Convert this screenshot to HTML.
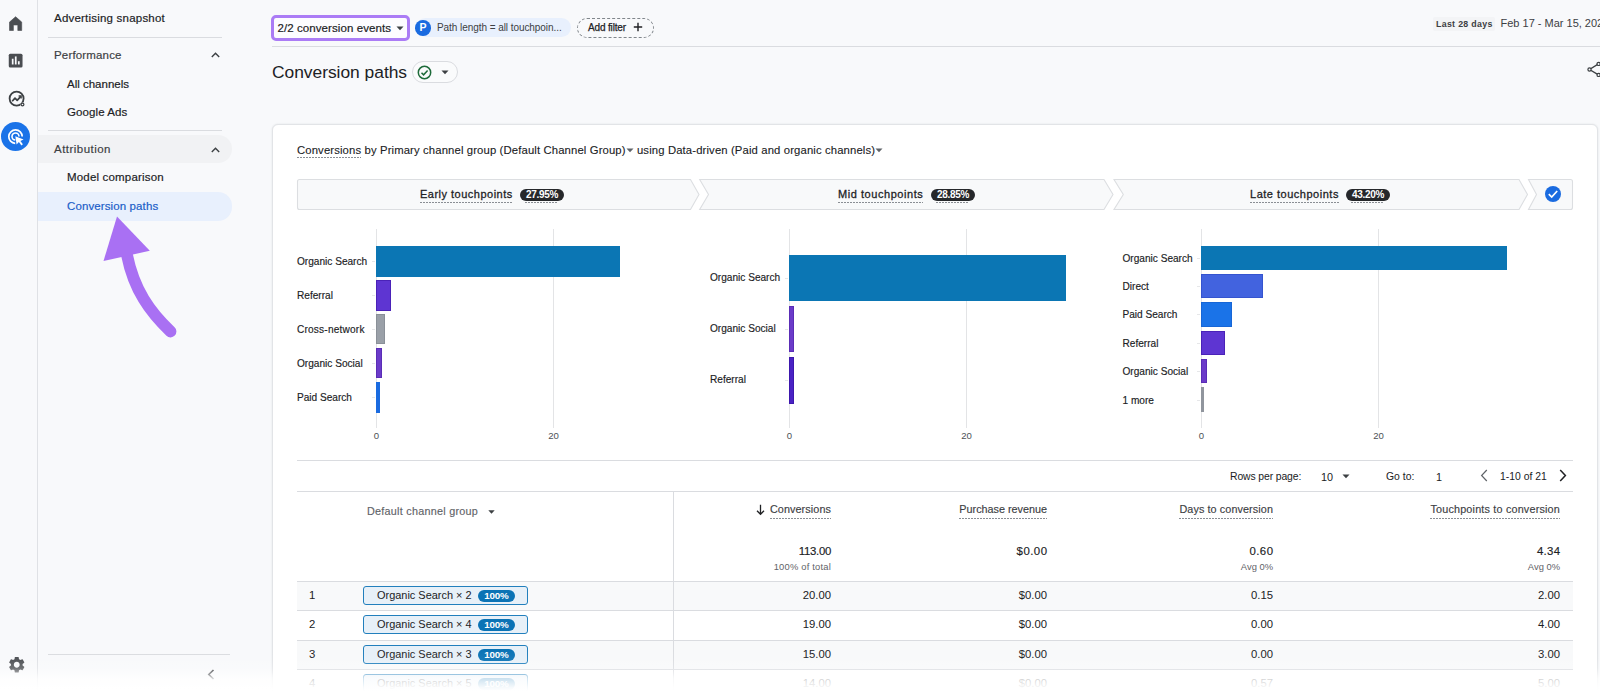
<!DOCTYPE html>
<html>
<head>
<meta charset="utf-8">
<title>Conversion paths</title>
<style>
*{box-sizing:border-box;margin:0;padding:0}
html,body{width:1600px;height:694px;overflow:hidden;background:#f8f9fb;font-family:"Liberation Sans",sans-serif;color:#202124}
#root{position:relative;width:1600px;height:694px;overflow:hidden;background:#f8f9fb}
.a{position:absolute;white-space:nowrap;line-height:1}
.t{position:absolute;white-space:nowrap;line-height:1;transform-origin:0 50%}
.r{text-align:right}
.m{-webkit-text-stroke:.28px currentColor}
.m2{-webkit-text-stroke:.18px currentColor}
.hl{position:absolute;height:1px;background:#dadce0}
.vl{position:absolute;width:1px;background:#dadce0}
.dot{background:repeating-linear-gradient(to right,#8a8e94 0,#8a8e94 2px,rgba(0,0,0,0) 2px,rgba(0,0,0,0) 3px) 0 100%/100% 1px no-repeat;padding-bottom:2.5px}
/* sidebar */
.nav{font-size:11.5px;color:#202124}
.navh{font-size:11.5px;color:#3c4043}
/* chart */
.lbl{font-size:10.1px;color:#202124;-webkit-text-stroke:.15px #202124}
.tick{font-size:9.600px;color:#4d5156;transform:translateX(-50%)}
.bar{position:absolute}
.grid{position:absolute;width:1px;background:#e3e4e6}
/* table */
.th{font-size:10.8px;color:#3c4043;-webkit-text-stroke:.15px currentColor}
.td{font-size:11.3px;color:#202124}
.th .dot{padding-bottom:3.800px}
.pg{-webkit-text-stroke:0 !important}
.sub{font-size:9.400px;color:#5f6368}
.tot{font-size:11.400px;color:#202124;-webkit-text-stroke:.15px #202124}
.chip{position:absolute;left:363px;width:164.500px;height:19px;border:1px solid #217fbd;border-radius:3px;background:#e7f0f8}
.chip span.x{position:absolute;left:13px;top:3.300px;font-size:10.950px;color:#202124;line-height:1;white-space:nowrap}
.chip span.b{position:absolute;left:114px;top:3px;width:37px;height:11.500px;border-radius:6px;background:#0b73b5;color:#fff;font-size:9.800px;font-weight:bold;line-height:11.500px;text-align:center;letter-spacing:-.2px}
.stage{position:absolute;top:179px;height:31px}
.badge{position:absolute;top:189px;height:11.5px;width:44px;border-radius:6px;background:#26282b;color:#fff;font-size:10px;font-weight:bold;line-height:12px;text-align:center;letter-spacing:-.3px}
.badge i{font-style:normal}
.badge:after{content:"";position:absolute;left:5px;right:6px;top:13px;height:1px;background:repeating-linear-gradient(to right,#8a8e94 0,#8a8e94 2px,rgba(0,0,0,0) 2px,rgba(0,0,0,0) 3px)}
</style>
</head>
<body>
<div id="root">

<!-- ===== icon rail ===== -->
<div class="vl" style="left:37px;top:0;height:694px;background:#dfe1e5"></div>
<svg class="a" style="left:8px;top:15px" width="16" height="17" viewBox="0 0 16 17"><path d="M1.500 7.100 L7.600 1.700 L13.700 7.100 V15.500 H9.800 V10 H5.400 V15.500 H1.500 Z" fill="#4a4d51" stroke="#4a4d51" stroke-width=".6" stroke-linejoin="round"/></svg>
<svg class="a" style="left:8.400px;top:53px" width="15.300" height="15.300" viewBox="0 0 16 16"><rect x="0.8" y="0.8" width="14.4" height="14.4" rx="1.6" fill="#4a4d51"/><rect x="4" y="6" width="1.8" height="6" fill="#f8f9fb"/><rect x="7.2" y="3.6" width="1.8" height="8.4" fill="#f8f9fb"/><rect x="10.4" y="8.6" width="1.8" height="3.4" fill="#f8f9fb"/></svg>
<svg class="a" style="left:7.900px;top:89.700px" width="18" height="18" viewBox="0 0 18 18"><circle cx="8.600" cy="8.600" r="7" fill="none" stroke="#3c4043" stroke-width="1.800"/><path d="M4.200 11.200 L7 8.100 L9.200 10.300 L12.800 6.400" fill="none" stroke="#3c4043" stroke-width="1.700" stroke-linejoin="round"/><path d="M10.600 6 H13.100 V8.500" fill="none" stroke="#3c4043" stroke-width="1.400"/><rect x="12.600" y="12.600" width="4" height="4" fill="#f8f9fb"/><circle cx="14.500" cy="14.500" r="1.400" fill="#f8f9fb" stroke="#3c4043" stroke-width="1.200"/></svg>
<div class="a" style="left:1px;top:122px;width:29px;height:29px;border-radius:50%;background:#1a73e8"></div>
<svg class="a" style="left:6px;top:127px" width="20" height="20" viewBox="0 0 20 20"><path d="M16.2 9.6 A6.7 6.7 0 1 0 9.2 16.3" fill="none" stroke="#fff" stroke-width="1.7"/><path d="M13 9.6 A3.5 3.5 0 1 0 9.3 13" fill="none" stroke="#fff" stroke-width="1.6"/><path d="M9.3 9.2 L17.6 12.6 L14.4 14 L16.9 17.3 L15.4 18.4 L12.9 15.1 L10.6 17.4 Z" fill="#fff"/></svg>
<svg class="a" style="left:6.500px;top:654.500px" width="19.500" height="19.500" viewBox="0 0 24 24"><path fill="#4a4d51" d="M19.14 12.94c.04-.3.06-.61.06-.94 0-.32-.02-.64-.07-.94l2.03-1.58a.49.49 0 0 0 .12-.61l-1.92-3.32a.488.488 0 0 0-.59-.22l-2.39.96c-.5-.38-1.03-.7-1.62-.94l-.36-2.54a.484.484 0 0 0-.48-.41h-3.84c-.24 0-.43.17-.47.41l-.36 2.54c-.59.24-1.13.57-1.62.94l-2.39-.96c-.22-.08-.47 0-.59.22L2.74 8.87c-.12.21-.08.47.12.61l2.03 1.58c-.05.3-.09.63-.09.94s.02.64.07.94l-2.03 1.58a.49.49 0 0 0-.12.61l1.92 3.32c.12.22.37.29.59.22l2.39-.96c.5.38 1.03.7 1.62.94l.36 2.54c.05.24.24.41.48.41h3.84c.24 0 .44-.17.47-.41l.36-2.54c.59-.24 1.13-.56 1.62-.94l2.39.96c.22.08.47 0 .59-.22l1.92-3.32c.12-.22.07-.47-.12-.61l-2.01-1.58zM12 15.6c-1.98 0-3.600-1.620-3.600-3.600s1.620-3.600 3.600-3.600 3.600 1.620 3.600 3.600-1.620 3.600-3.600 3.600z"/></svg>

<!-- ===== sidebar ===== -->
<div class="t nav m2" id="s1" style="left:54px;top:12.700px;letter-spacing:.21px">Advertising snapshot</div>
<div class="hl" style="left:48px;top:37px;width:174px"></div>
<div class="t navh m2" id="s2" style="left:54px;top:49.700px;letter-spacing:.16px">Performance</div>
<svg class="a" style="left:211px;top:51.800px" width="9" height="6" viewBox="0 0 9 6"><path d="M0.8 5 L4.5 1.3 L8.2 5" fill="none" stroke="#3c4043" stroke-width="1.4"/></svg>
<div class="t nav m2" id="s3" style="left:67px;top:78.700px">All channels</div>
<div class="t nav m2" id="s4" style="left:67px;top:106.700px;letter-spacing:.09px">Google Ads</div>
<div class="hl" style="left:48px;top:130px;width:174px"></div>
<div class="a" style="left:38px;top:135px;width:194px;height:28px;border-radius:0 14px 14px 0;background:#f1f2f4"></div>
<div class="t navh m2" id="s5" style="left:54px;top:143.700px;letter-spacing:.47px">Attribution</div>
<svg class="a" style="left:211px;top:146.800px" width="9" height="6" viewBox="0 0 9 6"><path d="M0.8 5 L4.5 1.3 L8.2 5" fill="none" stroke="#3c4043" stroke-width="1.4"/></svg>
<div class="t nav m2" id="s6" style="left:67px;top:172.400px;letter-spacing:.18px">Model comparison</div>
<div class="a" style="left:38px;top:192px;width:194px;height:29px;border-radius:0 14px 14px 0;background:#e8f0fd"></div>
<div class="t nav m2" id="s7" style="left:67px;top:200.500px;letter-spacing:.11px;color:#1a5dc8">Conversion paths</div>
<div class="hl" style="left:48px;top:653.500px;width:182px"></div>
<svg class="a" style="left:207px;top:669px" width="8" height="11" viewBox="0 0 8 11"><path d="M6.500 1 L1.800 5.500 L6.500 10" fill="none" stroke="#2f3236" stroke-width="1.600"/></svg>

<!-- purple arrow -->
<svg class="a" style="left:95px;top:210px" width="90" height="135" viewBox="95 210 90 135">
<path d="M127 255 C134 290 150 312 170.5 331.5" fill="none" stroke="#a970f3" stroke-width="11.800" stroke-linecap="round"/>
<path d="M117 216.5 L103.5 261 L149.8 250.8 Z" fill="#a970f3"/>
</svg>

<!-- ===== top filter bar ===== -->
<div class="a" style="left:270.700px;top:14.500px;width:139.500px;height:26.500px;border:3.500px solid #ab7cf5;border-radius:5px;background:#fdfcff"></div>
<div class="t m2" id="f1" style="left:277.5px;top:22.5px;letter-spacing:.08px;font-size:11.5px;color:#202124">2/2 conversion events</div>
<svg class="a" style="left:396px;top:26px" width="8" height="5" viewBox="0 0 8 5"><path d="M0.5 0.5 H7.5 L4 4.3 Z" fill="#3c4043"/></svg>
<div class="a" style="left:416px;top:18px;width:155px;height:19px;border-radius:10px;background:#e8f0fd"></div>
<div class="a" style="left:415.200px;top:20px;width:15.600px;height:15.600px;border-radius:50%;background:#1a6be0;color:#fff;font-size:10.500px;font-weight:bold;text-align:center;line-height:15.600px">P</div>
<div class="t" id="f2" style="left:437px;top:23px;letter-spacing:-.06px;font-size:10px;color:#3c4043">Path length = all touchpoin...</div>
<div class="a" style="left:577px;top:18px;width:77px;height:20px;border:1px dashed #80868b;border-radius:10px"></div>
<div class="t" id="f3" style="left:588px;top:23px;letter-spacing:-.15px;font-size:10px;-webkit-text-stroke:.25px #202124;color:#202124">Add filter</div>
<svg class="a" style="left:633px;top:22.300px" width="10" height="10" viewBox="0 0 10 10"><path d="M5 0.8 V9.2 M0.8 5 H9.2" stroke="#202124" stroke-width="1.4"/></svg>
<div class="a" style="left:1433px;top:17px;width:62px;height:14px;background:#f3f4f6;border-radius:2px"></div>
<div class="t" id="f4" style="left:1436px;top:19.5px;font-size:8.8px;font-weight:bold;color:#3c4043;letter-spacing:.32px">Last 28 days</div>
<div class="t" id="f5" style="left:1500.500px;top:18px;font-size:11px;color:#3c4043">Feb 17 - Mar 15, 2024</div>
<div class="hl" style="left:272px;top:46px;width:1328px"></div>

<!-- title -->
<div class="t" id="h1" style="left:272px;top:63.500px;letter-spacing:-.02px;font-size:17.400px;color:#202124">Conversion paths</div>
<div class="a" style="left:411.500px;top:61.300px;width:46.200px;height:21.700px;border:1px solid #dadce0;border-radius:11px;background:#fafbfc"></div>
<svg class="a" style="left:417px;top:64.600px" width="15" height="15" viewBox="0 0 15 15"><circle cx="7.5" cy="7.5" r="6.2" fill="none" stroke="#1e6b3a" stroke-width="1.5"/><path d="M4.5 7.7 L6.6 9.8 L10.6 5.5" fill="none" stroke="#1e6b3a" stroke-width="1.5"/></svg>
<svg class="a" style="left:441px;top:69.600px" width="8" height="5" viewBox="0 0 8 5"><path d="M0.5 0.5 H7.5 L4 4.3 Z" fill="#3c4043"/></svg>
<svg class="a" style="left:1586px;top:60px" width="20" height="20" viewBox="0 0 20 20"><path d="M12.500 3.900 L3.500 9.500 L12.500 14.900" fill="none" stroke="#3c4043" stroke-width="1.300"/><circle cx="3.500" cy="9.500" r="1.600" fill="#f8f9fb" stroke="#3c4043" stroke-width="1.200"/><circle cx="12.600" cy="3.900" r="1.600" fill="#f8f9fb" stroke="#3c4043" stroke-width="1.200"/><circle cx="12.600" cy="14.900" r="1.600" fill="#f8f9fb" stroke="#3c4043" stroke-width="1.200"/></svg>

<!-- ===== card ===== -->
<div class="a" style="left:271.500px;top:124px;width:1326.500px;height:600px;background:#fff;border:1px solid #e2e4e7;border-radius:6px;box-shadow:0 0 2px rgba(60,64,67,.12)"></div>
<div class="t" id="c1" style="left:297px;top:145.300px;letter-spacing:.13px;font-size:11.3px;color:#202124;-webkit-text-stroke:.1px #202124"><span class="dot" style="padding-bottom:1.500px">Conversions</span> by Primary channel group (Default Channel Group)<svg width="8" height="5" viewBox="0 0 8 5" style="vertical-align:1px"><path d="M0.5 0.5 H7.5 L4 4.3 Z" fill="#5f6368"/></svg> using Data-driven (Paid and organic channels)<svg width="8" height="5" viewBox="0 0 8 5" style="vertical-align:1px"><path d="M0.5 0.5 H7.5 L4 4.3 Z" fill="#5f6368"/></svg></div>

<!-- stage headers -->
<svg class="a" style="left:296px;top:178px" width="1278" height="33" viewBox="296 178 1278 33">
<g fill="#f8f9fa" stroke="#dcdee1" stroke-width="1.100">
<path d="M299.500 179.500 H690.500 L699 194.500 L690.500 209.500 H299.500 Q297.500 209.500 297.500 207.500 V181.500 Q297.500 179.500 299.500 179.500 Z"/>
<path d="M699.700 179.500 H1104 L1113 194.500 L1104 209.500 H699.700 L708.500 194.500 Z"/>
<path d="M1114 179.500 H1519 L1527.500 194.500 L1519 209.500 H1114 L1123.300 194.500 Z"/>
<path d="M1528.500 179.500 H1570.500 Q1572.500 179.500 1572.500 181.500 V207.500 Q1572.500 209.500 1570.500 209.500 H1528.500 L1536.500 194.500 Z"/>
</g>
<circle cx="1553" cy="194" r="8" fill="#1a6be0"/>
<path d="M1548.800 194.200 L1551.700 197 L1557.200 191" fill="none" stroke="#fff" stroke-width="1.700"/>
</svg>
<div class="t m" id="st1" style="left:420px;top:189px;font-size:11px;letter-spacing:.49px"><span class="dot">Early touchpoints</span></div>
<div class="badge" style="left:520px"><i>27.95%</i></div>
<div class="t m" id="st2" style="left:838px;top:189px;font-size:11px;letter-spacing:.55px"><span class="dot">Mid touchpoints</span></div>
<div class="badge" style="left:931px"><i>28.85%</i></div>
<div class="t m" id="st3" style="left:1250px;top:189px;font-size:11px;letter-spacing:.51px"><span class="dot">Late touchpoints</span></div>
<div class="badge" style="left:1346px"><i>43.20%</i></div>

<!-- label ticks -->
<div class="a" style="left:372px;top:261px;width:3px;height:1px;background:#e6e7e9"></div><div class="a" style="left:372px;top:295px;width:3px;height:1px;background:#e6e7e9"></div><div class="a" style="left:372px;top:329px;width:3px;height:1px;background:#e6e7e9"></div><div class="a" style="left:372px;top:363px;width:3px;height:1px;background:#e6e7e9"></div><div class="a" style="left:372px;top:397px;width:3px;height:1px;background:#e6e7e9"></div><div class="a" style="left:785px;top:278px;width:3px;height:1px;background:#e6e7e9"></div><div class="a" style="left:785px;top:329px;width:3px;height:1px;background:#e6e7e9"></div><div class="a" style="left:785px;top:380px;width:3px;height:1px;background:#e6e7e9"></div><div class="a" style="left:1197px;top:258px;width:3px;height:1px;background:#e6e7e9"></div><div class="a" style="left:1197px;top:286px;width:3px;height:1px;background:#e6e7e9"></div><div class="a" style="left:1197px;top:314px;width:3px;height:1px;background:#e6e7e9"></div><div class="a" style="left:1197px;top:343px;width:3px;height:1px;background:#e6e7e9"></div><div class="a" style="left:1197px;top:371px;width:3px;height:1px;background:#e6e7e9"></div><div class="a" style="left:1197px;top:400px;width:3px;height:1px;background:#e6e7e9"></div>
<!-- chart 1 -->
<div class="grid" style="left:376px;top:229px;height:199px"></div>
<div class="grid" style="left:553px;top:229px;height:199px"></div>
<div class="bar" style="left:376px;top:246px;width:244px;height:31px;background:#0b76b4"></div>
<div class="bar" style="left:376px;top:280px;width:15px;height:31px;background:#5e35d2;border:1px solid #4a22b8"></div>
<div class="bar" style="left:376px;top:314px;width:9px;height:30px;background:#9aa0a8;border:1px solid #8a9098"></div>
<div class="bar" style="left:376px;top:348px;width:6px;height:30px;background:#6b3bc9;border:1px solid #5a2db6"></div>
<div class="bar" style="left:376px;top:382px;width:4px;height:31px;background:#1a6be0"></div>
<div class="t lbl" id="l11" style="left:297px;top:256.800px">Organic Search</div>
<div class="t lbl" id="l12" style="left:297px;top:290.800px">Referral</div>
<div class="t lbl" id="l13" style="left:297px;top:324.800px;letter-spacing:.2px">Cross-network</div>
<div class="t lbl" id="l14" style="left:297px;top:358.800px">Organic Social</div>
<div class="t lbl" id="l15" style="left:297px;top:392.800px">Paid Search</div>
<div class="a tick" style="left:376.500px;top:431px">0</div>
<div class="a tick" style="left:553.500px;top:431px">20</div>

<!-- chart 2 -->
<div class="grid" style="left:789px;top:229px;height:199px"></div>
<div class="grid" style="left:966px;top:229px;height:199px"></div>
<div class="bar" style="left:789px;top:255px;width:277px;height:46px;background:#0b76b4"></div>
<div class="bar" style="left:789px;top:306px;width:5px;height:46px;background:#6b3bc9;border:1px solid #5a2db6"></div>
<div class="bar" style="left:789px;top:357px;width:5px;height:47px;background:#4a22c4;border:1px solid #3d17ad"></div>
<div class="t lbl" id="l21" style="left:710px;top:273.400px">Organic Search</div>
<div class="t lbl" id="l22" style="left:710px;top:324.400px">Organic Social</div>
<div class="t lbl" id="l23" style="left:710px;top:375.400px">Referral</div>
<div class="a tick" style="left:789.500px;top:431px">0</div>
<div class="a tick" style="left:966.500px;top:431px">20</div>

<!-- chart 3 -->
<div class="grid" style="left:1201.400px;top:229px;height:199px"></div>
<div class="grid" style="left:1378px;top:229px;height:199px"></div>
<div class="bar" style="left:1201.400px;top:246px;width:306px;height:24px;background:#0b76b4"></div>
<div class="bar" style="left:1201.400px;top:274px;width:62px;height:24px;background:#4263df;border:1px solid #3554cf"></div>
<div class="bar" style="left:1201.400px;top:302px;width:31px;height:25px;background:#1a73e8;border:1px solid #1766d6"></div>
<div class="bar" style="left:1201.400px;top:331px;width:24px;height:24px;background:#5e35d2;border:1px solid #4a22b8"></div>
<div class="bar" style="left:1201.400px;top:359px;width:6px;height:24px;background:#6b3bc9;border:1px solid #5a2db6"></div>
<div class="bar" style="left:1201.400px;top:387px;width:2.500px;height:25px;background:#90959d"></div>
<div class="t lbl" id="l31" style="left:1122.500px;top:254.000px">Organic Search</div>
<div class="t lbl" id="l32" style="left:1122.500px;top:282.000px">Direct</div>
<div class="t lbl" id="l33" style="left:1122.500px;top:310.000px">Paid Search</div>
<div class="t lbl" id="l34" style="left:1122.500px;top:339.000px">Referral</div>
<div class="t lbl" id="l35" style="left:1122.500px;top:367.000px">Organic Social</div>
<div class="t lbl" id="l36" style="left:1122.500px;top:396.000px">1 more</div>
<div class="a tick" style="left:1201.500px;top:431px">0</div>
<div class="a tick" style="left:1378.500px;top:431px">20</div>

<!-- ===== table ===== -->
<div class="hl" style="left:297px;top:460px;width:1276px"></div>
<div class="t th pg" id="p1" style="letter-spacing:-.11px;left:1230px;top:471.500px;color:#202124;font-size:10.400px">Rows per page:</div>
<div class="t th pg" id="p2" style="left:1321px;top:471.500px;color:#202124;font-size:10.800px">10</div>
<svg class="a" style="left:1342px;top:474px" width="8" height="5" viewBox="0 0 8 5"><path d="M0.5 0.5 H7.5 L4 4.3 Z" fill="#3c4043"/></svg>
<div class="t th pg" id="p3" style="left:1386px;top:471.500px;color:#202124;font-size:10.400px">Go to:</div>
<div class="t th pg" id="p4" style="left:1436px;top:471.500px;color:#202124;font-size:10.800px">1</div>
<svg class="a" style="left:1480px;top:469px" width="8" height="13" viewBox="0 0 8 13"><path d="M6.8 1 L1.6 6.500 L6.8 12" fill="none" stroke="#5f6368" stroke-width="1.200"/></svg>
<div class="t th pg" id="p5" style="left:1500px;top:471.500px;color:#202124;font-size:10.400px">1-10 of 21</div>
<svg class="a" style="left:1559px;top:469px" width="8" height="13" viewBox="0 0 8 13"><path d="M1.2 1 L6.400 6.500 L1.2 12" fill="none" stroke="#202124" stroke-width="1.500"/></svg>

<div class="hl" style="left:297px;top:491px;width:1276px"></div>
<div class="vl" style="left:673px;top:491px;height:203px"></div>
<div class="t th" id="h_c" style="left:367px;top:506px;letter-spacing:.26px;color:#5f6368">Default channel group</div>
<svg class="a" style="left:488px;top:510px" width="7" height="4" viewBox="0 0 7 4"><path d="M0.3 0.3 H6.7 L3.5 3.800 Z" fill="#3c4043"/></svg>

<svg class="a" style="left:756px;top:504px" width="9" height="12" viewBox="0 0 9 12"><path d="M4.500 0.800 V10 M1 6.800 L4.500 10.300 L8 6.800" fill="none" stroke="#202124" stroke-width="1.300"/></svg>
<div class="t th r" id="h1c" style="letter-spacing:.1px;right:769px;top:504px"><span class="dot">Conversions</span></div>
<div class="t th r" id="h2c" style="right:553px;top:504px"><span class="dot">Purchase revenue</span></div>
<div class="t th r" id="h3c" style="letter-spacing:.1px;right:327px;top:504px"><span class="dot">Days to conversion</span></div>
<div class="t th r" id="h4c" style="letter-spacing:.19px;right:40px;top:504px"><span class="dot">Touchpoints to conversion</span></div>

<div class="t tot r" style="right:769px;top:545.500px;letter-spacing:-.3px">113.00</div>
<div class="t sub r" style="right:769px;top:562px;letter-spacing:.2px">100% of total</div>
<div class="t tot r" style="right:553px;top:545.500px;letter-spacing:.47px;margin-right:-.47px">$0.00</div>
<div class="t tot r" style="right:327px;top:545.500px;letter-spacing:.47px;margin-right:-.47px">0.60</div>
<div class="t sub r" style="right:327px;top:562px">Avg 0%</div>
<div class="t tot r" style="right:40px;top:545.500px;letter-spacing:.28px;margin-right:-.28px">4.34</div>
<div class="t sub r" style="right:40px;top:562px">Avg 0%</div>

<!-- rows -->
<div class="a" style="left:297px;top:581px;width:1276px;height:30px;background:#f8f9fa;border-top:1px solid #dadce0"></div>
<div class="a" style="left:297px;top:610px;width:1276px;height:30px;border-top:1px solid #dadce0"></div>
<div class="a" style="left:297px;top:640px;width:1276px;height:30px;background:#f8f9fa;border-top:1px solid #dadce0"></div>
<div class="a" style="left:297px;top:669px;width:1276px;height:30px;border-top:1px solid #dadce0"></div>
<div class="vl" style="left:673px;top:581px;height:113px"></div>

<div class="t td" style="left:309px;top:590px">1</div>
<div class="chip" style="top:586px"><span class="x">Organic Search × 2</span><span class="b">100%</span></div>
<div class="t td r" style="right:769px;top:590px">20.00</div>
<div class="t td r" style="right:553px;top:590px">$0.00</div>
<div class="t td r" style="right:327px;top:590px">0.15</div>
<div class="t td r" style="right:40px;top:590px">2.00</div>

<div class="t td" style="left:309px;top:619px">2</div>
<div class="chip" style="top:615px"><span class="x">Organic Search × 4</span><span class="b">100%</span></div>
<div class="t td r" style="right:769px;top:619px">19.00</div>
<div class="t td r" style="right:553px;top:619px">$0.00</div>
<div class="t td r" style="right:327px;top:619px">0.00</div>
<div class="t td r" style="right:40px;top:619px">4.00</div>

<div class="t td" style="left:309px;top:649px">3</div>
<div class="chip" style="top:645px"><span class="x">Organic Search × 3</span><span class="b">100%</span></div>
<div class="t td r" style="right:769px;top:649px">15.00</div>
<div class="t td r" style="right:553px;top:649px">$0.00</div>
<div class="t td r" style="right:327px;top:649px">0.00</div>
<div class="t td r" style="right:40px;top:649px">3.00</div>

<div class="t td" style="left:309px;top:678px">4</div>
<div class="chip" style="top:674px"><span class="x">Organic Search × 5</span><span class="b">100%</span></div>
<div class="t td r" style="right:769px;top:678px">14.00</div>
<div class="t td r" style="right:553px;top:678px">$0.00</div>
<div class="t td r" style="right:327px;top:678px">0.57</div>
<div class="t td r" style="right:40px;top:678px">5.00</div>

<!-- bottom fade -->
<div class="a" style="left:0;top:650px;width:1600px;height:44px;background:linear-gradient(to bottom,rgba(255,255,255,0) 0%,rgba(255,255,255,.06) 23%,rgba(255,255,255,.2) 41%,rgba(255,255,255,.45) 52%,rgba(255,255,255,.78) 64%,rgba(255,255,255,.88) 75%,rgba(255,255,255,.97) 86%,rgba(255,255,255,1) 94%,#fff 100%)"></div>
</div>
</body>
</html>
